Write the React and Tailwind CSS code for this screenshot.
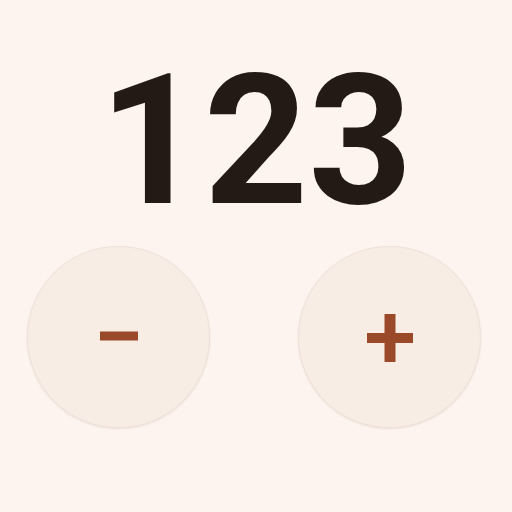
import React, { useState } from 'react';

export default function App() {
    const [count, setCount] = useState(123);

    return (
        <div className="w-full h-screen bg-[#fdf4ef] flex flex-col items-center justify-center pb-[34px] font-['Roboto',sans-serif]">
            {/* Counter value */}
            <div className="text-[182px] font-bold leading-none text-[#231a16]">
                {count}
            </div>

            {/* Controls */}
            <div className="flex gap-[88px] mt-[14px] mr-[4px]">
                <button
                    onClick={() => setCount(count - 1)}
                    className="w-[183px] h-[182px] rounded-full bg-[#f8ede5] border border-[#efe2d9] shadow-[0_1px_2px_rgba(120,80,60,0.12)] flex items-center justify-center"
                >
                    <svg width="38" height="10" viewBox="0 0 38 10" className="mb-[2px]">
                        <rect x="0" y="0.5" width="38" height="9" fill="#9b4a29" />
                    </svg>
                </button>
                <button
                    onClick={() => setCount(count + 1)}
                    className="w-[183px] h-[182px] rounded-full bg-[#f8ede5] border border-[#efe2d9] shadow-[0_1px_2px_rgba(120,80,60,0.12)] flex items-center justify-center"
                >
                    <svg width="46" height="48" viewBox="0 0 46 48" className="mt-[2px]">
                        <rect x="17.5" y="0" width="11" height="48" fill="#9b4a29" />
                        <rect x="0" y="19" width="46" height="10" fill="#9b4a29" />
                    </svg>
                </button>
            </div>
        </div>
    );
}
